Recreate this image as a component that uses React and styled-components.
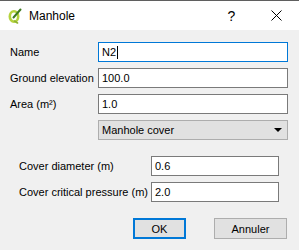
import styled, { createGlobalStyle } from "styled-components"

const Global = createGlobalStyle`
    html, body {
        margin: 0;
        padding: 0;
        background: #f0f0f0;
    }
    body {
        font-family: "Liberation Sans", Arial, sans-serif;
        font-size: 11px;
        color: #000;
    }
`

const Window = styled.div`
    width: 299px;
    height: 250px;
    display: flex;
    flex-direction: column;
    background: #f0f0f0;
    overflow: hidden;
`

const TitleBar = styled.div`
    height: 29px;
    border-top: 1px solid #5f5f5f;
    background: #fff;
    display: flex;
    align-items: center;
    padding-left: 8px;
    flex-shrink: 0;
`

const Title = styled.span`
    margin-left: 7px;
    font-size: 12px;
    flex: 1;
`

const TitleButton = styled.div`
    width: 45px;
    height: 29px;
    display: flex;
    align-items: center;
    justify-content: center;
    font-size: 14px;
`

const Body = styled.div`
    padding: 12px 11px 0 10px;
    display: flex;
    flex-direction: column;
`

const Row = styled.div`
    display: grid;
    grid-template-columns: ${({ $label }) => $label}px 1fr;
    align-items: center;
    margin-bottom: 6px;
`

const Label = styled.label`
    white-space: nowrap;
`

const Field = styled.div`
    height: 18px;
    border: 1px solid ${({ $focus }) => ($focus ? "#0078d7" : "#7a7a7a")};
    background: #fff;
    display: flex;
    align-items: center;
    padding-left: 3px;
    font-size: 11px;
`

const Caret = styled.span`
    width: 1px;
    height: 13px;
    background: #000;
    margin-left: 1px;
`

const Combo = styled.div`
    grid-column: 2;
    height: 18px;
    border: 1px solid #adadad;
    background: #e1e1e1;
    display: flex;
    align-items: center;
    justify-content: space-between;
    padding: 0 5px 0 3px;
`

const Arrow = styled.span`
    width: 0;
    height: 0;
    border-left: 4px solid transparent;
    border-right: 4px solid transparent;
    border-top: 4px solid #000;
`

const Group = styled.div`
    margin: 10px 9px 0 9px;
    display: flex;
    flex-direction: column;
`

const Buttons = styled.div`
    display: flex;
    justify-content: flex-end;
    gap: 28px;
    margin-top: 10px;
    padding-right: 1px;
`

const Button = styled.button`
    height: 21px;
    width: ${({ $w }) => $w}px;
    background: #e1e1e1;
    border: ${({ $default }) => ($default ? "2px solid #0078d7" : "1px solid #adadad")};
    font-family: "Liberation Sans", Arial, sans-serif;
    font-size: 11px;
    color: #000;
    padding: 0;
`

const QgisLogo = () => (
    <svg width="14" height="16" viewBox="0 0 14 16">
        <ellipse cx="6" cy="8.5" rx="4.2" ry="5.2" fill="none" stroke="#b5d33d" strokeWidth="2.6" />
        <path d="M5.5 9.5 L12.5 1.5" stroke="#3d7a1f" strokeWidth="2" strokeLinecap="round" />
        <path d="M6.5 13 L9.5 15" stroke="#8fb330" strokeWidth="1.6" strokeLinecap="round" />
    </svg>
)

const CloseIcon = () => (
    <svg width="11" height="11" viewBox="0 0 11 11">
        <path d="M0.5 0.5 L10.5 10.5 M10.5 0.5 L0.5 10.5" stroke="#000" strokeWidth="1" />
    </svg>
)

const App = () => {
    return (
        <Window>
            <Global />
            <TitleBar>
                <QgisLogo />
                <Title>Manhole</Title>
                <TitleButton>?</TitleButton>
                <TitleButton>
                    <CloseIcon />
                </TitleButton>
            </TitleBar>
            <Body>
                <Row $label={88}>
                    <Label>Name</Label>
                    <Field $focus>
                        N2
                        <Caret />
                    </Field>
                </Row>
                <Row $label={88}>
                    <Label>Ground elevation</Label>
                    <Field>100.0</Field>
                </Row>
                <Row $label={88}>
                    <Label>Area (m²)</Label>
                    <Field>1.0</Field>
                </Row>
                <Row $label={88}>
                    <Combo>
                        Manhole cover
                        <Arrow />
                    </Combo>
                </Row>
                <Group>
                    <Row $label={132}>
                        <Label>Cover diameter (m)</Label>
                        <Field>0.6</Field>
                    </Row>
                    <Row $label={132}>
                        <Label>Cover critical pressure (m)</Label>
                        <Field>2.0</Field>
                    </Row>
                </Group>
                <Buttons>
                    <Button $default $w={53}>OK</Button>
                    <Button $w={73}>Annuler</Button>
                </Buttons>
            </Body>
        </Window>
    )
}

export default App
